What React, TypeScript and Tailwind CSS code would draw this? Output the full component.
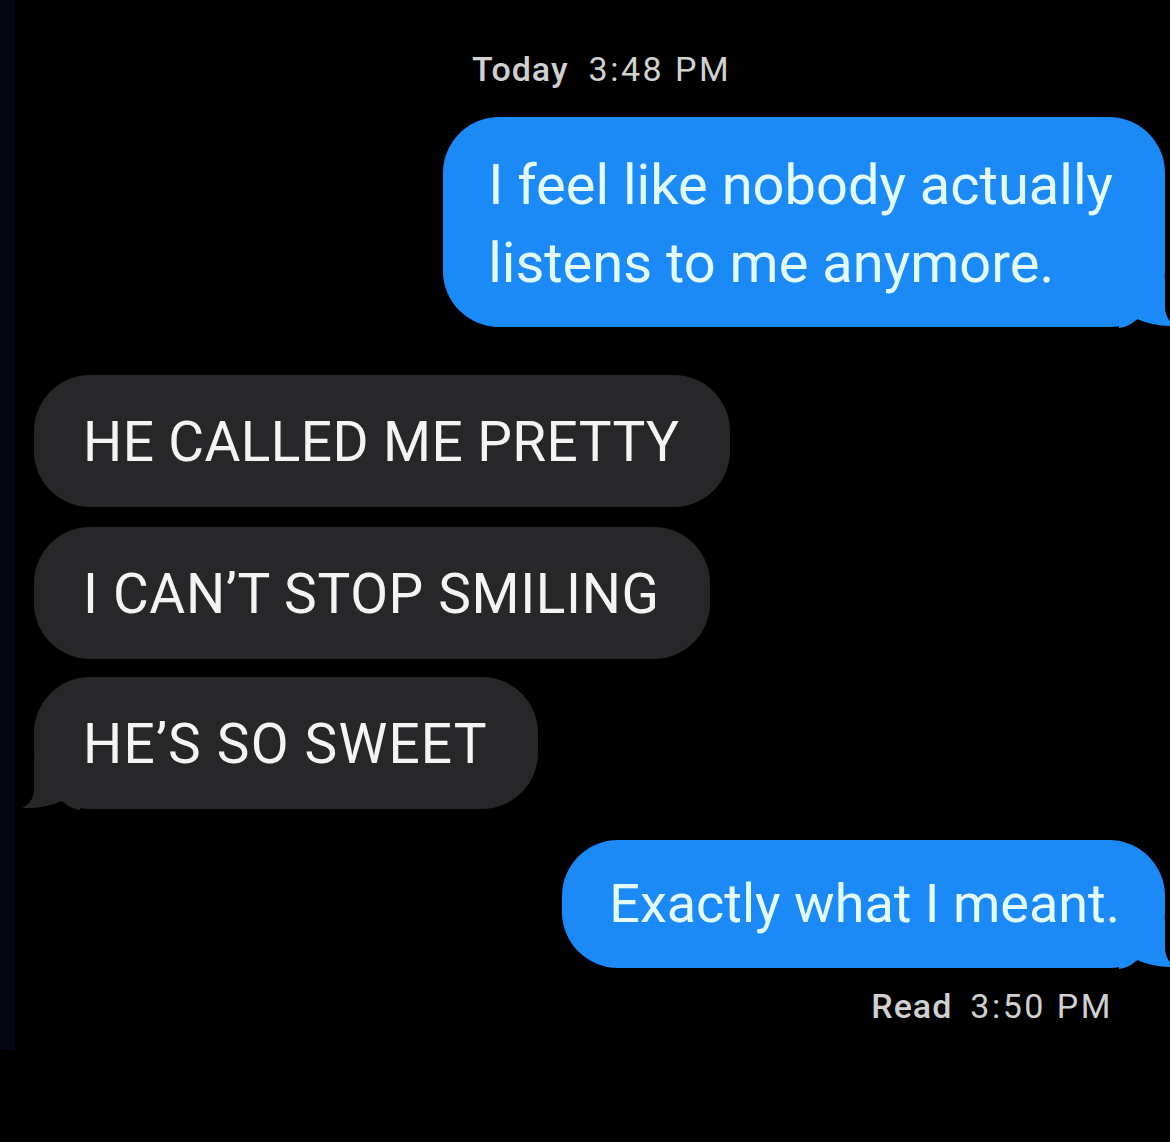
import React from "react";

const LeftTail = () => (
  <svg
    className="absolute left-[-14px] bottom-[-1px] w-[60px] h-[50px] fill-[#27272a]"
    viewBox="0 0 60 50"
    aria-hidden="true"
  >
    <path d="M14 0 L60 0 L60 50 Q 50 49 42 41 Q 24 49 2 48 C 9 45 14 39 14 28 Z" />
  </svg>
);

const RightTail = () => (
  <svg
    className="absolute right-[-14px] bottom-[-1px] w-[60px] h-[50px] fill-[#1b8af7]"
    viewBox="0 0 60 50"
    aria-hidden="true"
  >
    <path d="M46 0 L0 0 L0 50 Q 10 49 18 41 Q 36 49 58 48 C 51 45 46 39 46 28 Z" />
  </svg>
);

const GrayBubble = ({ text, tail, className }: { text: string; tail?: boolean; className: string }) => (
  <div
    className={`relative self-start ml-[19px] bg-[#27272a] rounded-[56px] pl-[49px] pr-[50px] pt-[29px] pb-[27px] text-[55px] leading-[76px] text-[#f4f4f5] whitespace-nowrap ${className}`}
  >
    {text}
    {tail && <LeftTail />}
  </div>
);

export default function App() {
  return (
    <div className="w-[1170px] h-[1142px] bg-black flex overflow-hidden font-['Roboto',_'Liberation_Sans',_sans-serif]">
      {/* left edge strip */}
      <div className="w-[15px] h-[1050px] bg-[#030814] shrink-0" />

      <div className="flex-1 flex flex-col">
        {/* Time header */}
        <div className="mt-[52px] ml-[457px] flex gap-[20px] text-[34px] leading-none text-[#d0d0d0]">
          <span className="font-medium tracking-[1px]">Today</span>
          <span className="tracking-[2.5px]">3:48 PM</span>
        </div>

        {/* Outgoing 1 */}
        <div className="relative self-end mr-[5px] mt-[31px] bg-[#1b8af7] rounded-[56px] pl-[45px] pr-[52px] pt-[29px] pb-[25px] text-[56px] leading-[78px] text-[#e3fbff] whitespace-nowrap">
          I feel like nobody actually
          <br />
          listens to me anymore.
          <RightTail />
        </div>

        {/* Incoming */}
        <GrayBubble text="HE CALLED ME PRETTY" className="mt-[48px] tracking-[0.4px]" />
        <GrayBubble text="I CAN’T STOP SMILING" className="mt-[20px] tracking-[0.65px]" />
        <GrayBubble text="HE’S SO SWEET" tail className="mt-[18px] tracking-[1.2px]" />

        {/* Outgoing 2 */}
        <div className="relative self-end mr-[5px] mt-[31px] bg-[#1b8af7] rounded-[56px] pl-[47px] pr-[45px] pt-[25px] pb-[25px] text-[54px] leading-[78px] text-[#e3fbff] whitespace-nowrap">
          Exactly what I meant.
          <RightTail />
        </div>

        {/* Read receipt */}
        <div className="self-end mr-[57px] mt-[21px] flex gap-[18px] text-[34px] leading-none text-[#d0d0d0]">
          <span className="font-medium tracking-[1px]">Read</span>
          <span className="tracking-[2.5px]">3:50 PM</span>
        </div>
      </div>
    </div>
  );
}
